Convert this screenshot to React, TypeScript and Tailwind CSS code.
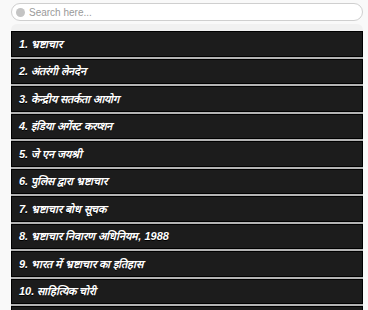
const items = [
  "1. भ्रष्टाचार",
  "2. अंतरंगी लेनदेन",
  "3. केन्द्रीय सतर्कता आयोग",
  "4. इंडिया अगेंस्ट करप्शन",
  "5. जे एन जयश्री",
  "6. पुलिस द्वारा भ्रष्टाचार",
  "7. भ्रष्टाचार बोध सूचक",
  "8. भ्रष्टाचार निवारण अधिनियम, 1988",
  "9. भारत में भ्रष्टाचार का इतिहास",
  "10. साहित्यिक चोरी",
  "",
];

export default function App() {
  return (
    <div className="h-[310px] overflow-hidden bg-[#f9f9f9] pl-[11px] pr-[5px] pt-[3px] font-['Liberation_Sans',sans-serif]">
      <div className="flex h-[18px] items-center gap-[4px] rounded-full border border-[#cfcfcf] bg-white px-[4px]">
        <span className="h-[9px] w-[9px] rounded-full bg-[#c4c4c4]" />
        <span className="text-[10px] text-[#9a9a9a]">Search here...</span>
      </div>
      <div className="mt-[3px] h-[7px] rounded-t-[6px] bg-[#f1f1f1]" />
      <ul className="flex flex-col gap-[2px] bg-[#b3b3b3]">
        {items.map((t, i) => (
          <li
            key={i}
            className="flex h-[25.5px] shrink-0 items-center border border-black bg-[#1c1c1c] px-[7px] text-[11px] font-bold italic text-white [text-shadow:0_1px_0_#000]"
          >
            {t}
          </li>
        ))}
      </ul>
    </div>
  );
}
